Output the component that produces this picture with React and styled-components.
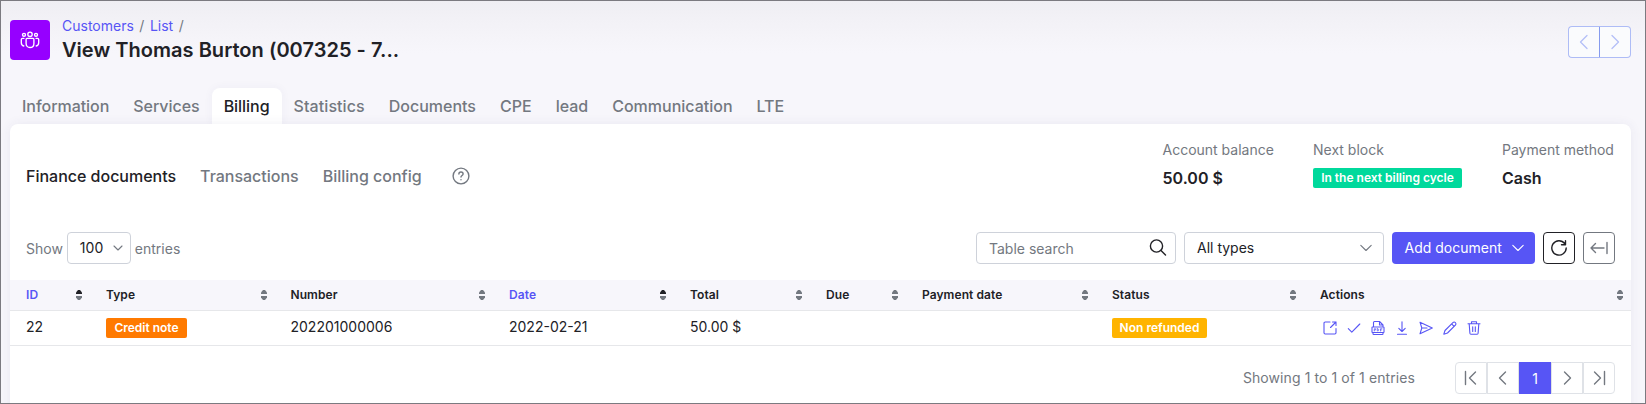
import React from "react";
import styled, { createGlobalStyle, css } from "styled-components";

const c = {
  primary: "#5755f5",
  link: "#5755f5",
  text: "#212126",
  muted: "#737880",
  line: "#e6e7ea",
  field: "#ced2da",
};

const GlobalStyle = createGlobalStyle`
  *, *::before, *::after { box-sizing: border-box; }
  body { margin: 0; }
  body, button, input { font-family: Inter, "Liberation Sans", sans-serif; }
  button, input { padding: 0; margin: 0; }
  svg { display: block; flex: none; }
`;

const Page = styled.div`
  width: 1646px;
  height: 404px;
  overflow: hidden;
  border: 1px solid #7b7a80;
  padding: 19px 14px 0 9px;
  font-size: 14px;
  line-height: 20px;
  color: ${c.text};
  background: linear-gradient(#efeef3 0, #f2f1f6 18px, #f7f6fb 52px, #f7f6fb 100%);
`;

const Header = styled.header`
  display: flex;
  justify-content: space-between;
  height: 68px;
`;

const Identity = styled.div`
  display: flex;
  gap: 12px;
`;

const Tile = styled.div`
  width: 40px;
  height: 40px;
  border-radius: 4px;
  background: #9600ff;
  color: #fff;
  display: flex;
  align-items: center;
  justify-content: center;
`;

const Crumbs = styled.nav`
  display: flex;
  gap: 5.5px;
  height: 12px;
  line-height: 12px;
  color: ${c.muted};
`;

const Crumb = styled.a`
  color: ${c.link};
`;

const Title = styled.h1`
  margin: 4px 0 0;
  font-size: 20px;
  line-height: 29px;
  font-weight: 600;
  letter-spacing: 0.03px;
`;

const Pager = styled.div`
  display: flex;
  height: 32px;
  margin-top: 6px;
`;

const PagerButton = styled.button`
  width: 32px;
  height: 32px;
  display: flex;
  align-items: center;
  justify-content: center;
  border: 1px solid #aebcf6;
  background: #fafbfd;
  color: #b3bff7;
  &:first-child { border-radius: 4px 0 0 4px; border-right-color: #869bee; }
  &:last-child { border-radius: 0 4px 4px 0; border-left: 0; width: 31px; }
`;

const Tabs = styled.nav`
  display: flex;
  height: 36px;
`;

const Tab = styled.a`
  padding: 0 12px;
  font-size: 16px;
  line-height: 36px;
  font-weight: 500;
  color: ${c.muted};
  border-radius: 8px 8px 0 0;
  &:nth-child(-n + 3) { letter-spacing: -0.04px; }
  &:nth-child(4) { letter-spacing: 0.08px; }
  ${(p) => p.$active && css`
    color: ${c.text};
    background: #fff;
    box-shadow: 0 0 10px rgba(60, 50, 120, 0.05);
  `}
`;

const Card = styled.main`
  position: relative;
  height: 300px;
  background: #fff;
  border-radius: 8px;
  box-shadow: 0 0 12px rgba(60, 50, 120, 0.07);
`;

const Summary = styled.div`
  display: flex;
  justify-content: space-between;
  height: 108px;
  padding: 16px 16px 0;
`;

const SubTabs = styled.nav`
  display: flex;
  align-items: center;
  gap: 24px;
  height: 24px;
  margin-top: 24px;
  color: ${c.muted};
  > svg { margin-left: 6.5px; }
`;

const SubTab = styled.a`
  font-size: 16px;
  line-height: 24px;
  font-weight: 500;
  letter-spacing: -0.01px;
  color: ${(p) => (p.$active ? c.text : c.muted)};
`;

const Stats = styled.div`
  display: grid;
  grid-template-columns: 110.500px 149px 113px;
  column-gap: 40px;
`;

const Stat = styled.div`
  display: flex;
  flex-direction: column;
  align-items: flex-start;
  white-space: nowrap;
`;

const StatLabel = styled.span`
  color: ${c.muted};
  height: 28px;
`;

const StatValue = styled.strong`
  font-size: 16px;
  line-height: 20px;
  font-weight: 600;
`;

const Badge = styled.span`
  display: inline-block;
  width: ${(p) => p.$width}px;
  height: 20px;
  text-align: center;
  border-radius: 2px;
  font-size: 12px;
  line-height: 20px;
  font-weight: 600;
  white-space: nowrap;
  color: #fff;
  background: ${(p) => p.$color};
`;

const Toolbar = styled.div`
  display: flex;
  justify-content: space-between;
  height: 48px;
  padding: 0 16px;
`;

const Length = styled.label`
  display: flex;
  gap: 4px;
  height: 32px;
  line-height: 34px;
  color: ${c.muted};
`;

const Controls = styled.div`
  display: flex;
  gap: 8px;
`;

const Field = styled.div`
  display: flex;
  align-items: center;
  justify-content: space-between;
  width: ${(p) => p.$width}px;
  height: 32px;
  padding: 0 ${(p) => p.$end || 11}px 0 12px;
  border: 1px solid ${c.field};
  border-radius: 4px;
  background: #fff;
  line-height: 30px;
  color: ${c.text};
  > svg { color: ${c.muted}; }
`;

const SearchInput = styled.input`
  width: 150px;
  height: 20px;
  margin-top: 1px;
  border: 0;
  outline: 0;
  font-size: 14px;
  &::placeholder { color: ${c.muted}; opacity: 1; }
`;

const AddButton = styled.button`
  display: flex;
  align-items: center;
  justify-content: space-between;
  width: 143px;
  height: 32px;
  padding: 0 11px 1px 12.5px;
  border: 0;
  border-radius: 4px;
  font-size: 14px;
  color: #fff;
  background: ${c.primary};
`;

const IconButton = styled.button`
  width: 32px;
  height: 32px;
  display: flex;
  align-items: center;
  justify-content: center;
  border: 1px solid currentColor;
  border-radius: 4px;
  background: #fff;
  color: ${(p) => (p.$muted ? c.muted : c.text)};
`;

const Row = styled.div`
  display: grid;
  grid-template-columns: 80px 184.500px 218.500px 181px 136px 96px 190px 208px 327px;
  height: ${(p) => (p.$head ? 31 : 35)}px;
  border-bottom: 1px solid ${c.line};
  background: ${(p) => (p.$head ? "#f7f6fb" : "#fff")};
`;

const HeadCell = styled.div`
  display: flex;
  align-items: center;
  justify-content: space-between;
  padding: 0 8px 0 16px;
  font-size: 12px;
  font-weight: 600;
  letter-spacing: 0.07px;
  color: ${(p) => (p.$sorted ? c.link : c.text)};
`;

const Cell = styled.div`
  display: flex;
  align-items: center;
  padding: 0 16px;
`;

const Value = styled.span`
  line-height: 32px;
  height: 34px;
`;

const Actions = styled.div`
  display: flex;
  gap: 8px;
  padding-left: 2px;
  color: ${c.link};
`;

const Footer = styled.footer`
  display: flex;
  justify-content: flex-end;
  gap: 40px;
  padding: 16px 16px 0;
  line-height: 32px;
  letter-spacing: 0.09px;
  color: ${c.muted};
`;

const Pagination = styled.div`
  display: flex;
`;

const PageButton = styled.button`
  width: 32px;
  height: 32px;
  display: flex;
  align-items: center;
  justify-content: center;
  font-size: 14px;
  border: 1px solid #dfe2e7;
  background: #fff;
  color: ${c.muted};
  &:first-child { border-radius: 4px 0 0 4px; }
  &:last-child { border-radius: 0 4px 4px 0; }
  ${(p) => p.$current && css`
    border-color: ${c.primary};
    background: ${c.primary};
    color: #fff;
  `}
`;

function Icon({ size = 16, width = 1.1, children }) {
  return (
    <svg width={size} height={size} viewBox={`0 0 ${size} ${size}`} fill="none" stroke="currentColor"
      strokeWidth={width} strokeLinecap="round" strokeLinejoin="round">{children}</svg>
  );
}

const Chevron = ({ wide }) => (
  <Icon size={12}>{wide ? <path d="M.8 3.3 6 8.5l5.200-5.200" /> : <path d="m2 4 4 4 4-4" />}</Icon>
);

const People = () => (
  <Icon size={20} width={1.35}>
    <circle cx="10" cy="4.300" r="2.200" />
    <circle cx="4" cy="4.800" r="1.500" />
    <circle cx="16" cy="4.800" r="1.500" />
    <path d="M7 8.300h6q.9 0 .9 1v4.100c0 2.500-1.500 4.100-3.900 4.100s-3.900-1.600-3.900-4.100V9.300q0-1 .9-1z" />
    <path d="M3.900 8.400H2.500q-1.200 0-1.200 1.200v3.200c0 1.700.9 2.900 2.500 3.200M16.100 8.400h1.400q1.200 0 1.200 1.200v3.200c0 1.700-.9 2.900-2.500 3.200" />
  </Icon>
);

const Sort = ({ active }) => (
  <svg width="6" height="10" viewBox="0 0 6 10">
    <path d="M0 4V2.500L2 0h2l2 2.500V4z" fill={active ? "#212126" : c.muted} />
    <path d="M0 6v1.500L2 10h2l2-2.500V6z" fill={c.muted} />
  </svg>
);

const columns = [
  ["ID", true], ["Type"], ["Number"], ["Date", true], ["Total"],
  ["Due"], ["Payment date"], ["Status"], ["Actions"],
];
const tabs = ["Information", "Services", "Billing", "Statistics", "Documents", "CPE", "lead", "Communication", "LTE"];

export default function App() {
  return (
    <>
      <GlobalStyle />
      <Page>
        <Header>
          <Identity>
            <Tile><People /></Tile>
            <div>
              <Crumbs><Crumb>Customers</Crumb><span>/</span><Crumb>List</Crumb><span>/</span></Crumbs>
              <Title>View Thomas Burton (007325 - 7...</Title>
            </div>
          </Identity>
          <Pager>
            <PagerButton aria-label="Previous"><Icon width={1.3}><path d="M11 1.500 4.500 8l6.500 6.500" /></Icon></PagerButton>
            <PagerButton aria-label="Next"><Icon width={1.3}><path d="M5 1.500 11.500 8 5 14.500" /></Icon></PagerButton>
          </Pager>
        </Header>
        <Tabs>{tabs.map((t) => <Tab key={t} $active={t === "Billing"}>{t}</Tab>)}</Tabs>
        <Card>
          <Summary>
            <SubTabs>
              <SubTab $active>Finance documents</SubTab>
              <SubTab>Transactions</SubTab>
              <SubTab>Billing config</SubTab>
              <Icon size={18} width={1.4}>
                <circle cx="9" cy="9" r="7.900" />
                <path d="M6.900 7.100c0-1.300.9-2.100 2.100-2.100s2.100.8 2.100 1.900c0 1.500-2.100 1.600-2.100 3.200M9 12.600v.2" />
              </Icon>
            </SubTabs>
            <Stats>
              <Stat><StatLabel>Account balance</StatLabel><StatValue>50.00 $</StatValue></Stat>
              <Stat><StatLabel>Next block</StatLabel><Badge $width={149} $color="#00d99c">In the next billing cycle</Badge></Stat>
              <Stat><StatLabel>Payment method</StatLabel><StatValue>Cash</StatValue></Stat>
            </Stats>
          </Summary>
          <Toolbar>
            <Length>Show<Field $width={64} $end={6}>100<Chevron /></Field>entries</Length>
            <Controls>
              <Field $width={200} $end={8}>
                <SearchInput placeholder="Table search" />
                <svg width="18" height="18" viewBox="0 0 18 18" fill="none" stroke="#212126" strokeWidth="1.4" strokeLinecap="round">
                  <circle cx="7.500" cy="7" r="6.100" /><path d="m12 11.500 4.500 4.500" />
                </svg>
              </Field>
              <Field $width={200} $end={11}>All types<Chevron wide /></Field>
              <AddButton>Add document<Chevron wide /></AddButton>
              <IconButton aria-label="Refresh">
                <Icon size={18} width={1.4}><path d="M14.700 4.500A7.200 7.200 0 1 0 16.200 9M15.500 1.700v4h-4" /></Icon>
              </IconButton>
              <IconButton $muted aria-label="Collapse">
                <Icon size={18} width={1.4}><path d="M1 9h13M5.500 4.500 1 9l4.500 4.500M17 3.500v11" /></Icon>
              </IconButton>
            </Controls>
          </Toolbar>
          <Row $head>
            {columns.map(([name, sorted]) => (
              <HeadCell key={name} $sorted={sorted}>{name}<Sort active={sorted} /></HeadCell>
            ))}
          </Row>
          <Row>
            <Cell><Value>22</Value></Cell>
            <Cell><Badge $width={81} $color="#ff7a00">Credit note</Badge></Cell>
            <Cell><Value>202201000006</Value></Cell>
            <Cell><Value>2022-02-21</Value></Cell>
            <Cell><Value>50.00 $</Value></Cell>
            <Cell />
            <Cell />
            <Cell><Badge $width={95} $color="#ffb400">Non refunded</Badge></Cell>
            <Cell>
              <Actions>
                <Icon><path d="M8 2H3.200Q2 2 2 3.200v9.600Q2 14 3.200 14h9.600q1.200 0 1.200-1.200V8.500M10.500 2H14v3.500M14 2 8.500 7.500" /></Icon>
                <Icon><path d="m2.300 8.700 3.500 3.500 8-8.200" /></Icon>
                <Icon>
                  <path d="M3.500 7V2.500q0-1 1-1h5L13 5v2M9.500 1.700V5H13M2.500 7h11q.5 0 .5.500v4.500q0 .5-.5.500h-11q-.5 0-.5-.5V7.500q0-.5.500-.5zM3 12.500v1.300q0 .7.700.7h8.600q.7 0 .7-.7v-1.300" />
                  <path strokeWidth=".7" d="M4.300 11V8.700h1.300v1.300H4.300M7.300 8.700V11q1.500 0 1.500-1.150t-1.500-1.150M10.500 11V8.700H12M10.500 9.900h1.200" />
                </Icon>
                <Icon><path d="M8 1.800v9.400M4.800 8.300 8 11.500l3.200-3.200M3.500 14.300h9" /></Icon>
                <Icon><path d="M2 2.200 14.300 8 2 13.800 3.800 8zM3.800 8H9" /></Icon>
                <Icon><path d="M1.800 14.200 3 10.500 10.900 2.600a1.600 1.600 0 0 1 2.500 2.500L5.500 13zM9.600 3.900l2.500 2.500" /></Icon>
                <Icon><path d="M2 3.800h12M5.500 3.500V1.800h5v1.700M3.200 4l.7 9.200q.1 1 1 1h6.200q.9 0 1-1L12.800 4M6.700 6.800v4.700M9.300 6.800v4.700" /></Icon>
              </Actions>
            </Cell>
          </Row>
          <Footer>
            <span>Showing 1 to 1 of 1 entries</span>
            <Pagination>
              <PageButton aria-label="First"><Icon width={1.4}><path d="M2.500 1.500v13M12.500 2 6.500 8l6 6" /></Icon></PageButton>
              <PageButton aria-label="Previous"><Icon width={1.4}><path d="M10.500 2 4.500 8l6 6" /></Icon></PageButton>
              <PageButton $current>1</PageButton>
              <PageButton aria-label="Next"><Icon width={1.4}><path d="m5.500 2 6 6-6 6" /></Icon></PageButton>
              <PageButton aria-label="Last"><Icon width={1.4}><path d="m3.500 2 6 6-6 6M13.500 1.500v13" /></Icon></PageButton>
            </Pagination>
          </Footer>
        </Card>
      </Page>
    </>
  );
}
